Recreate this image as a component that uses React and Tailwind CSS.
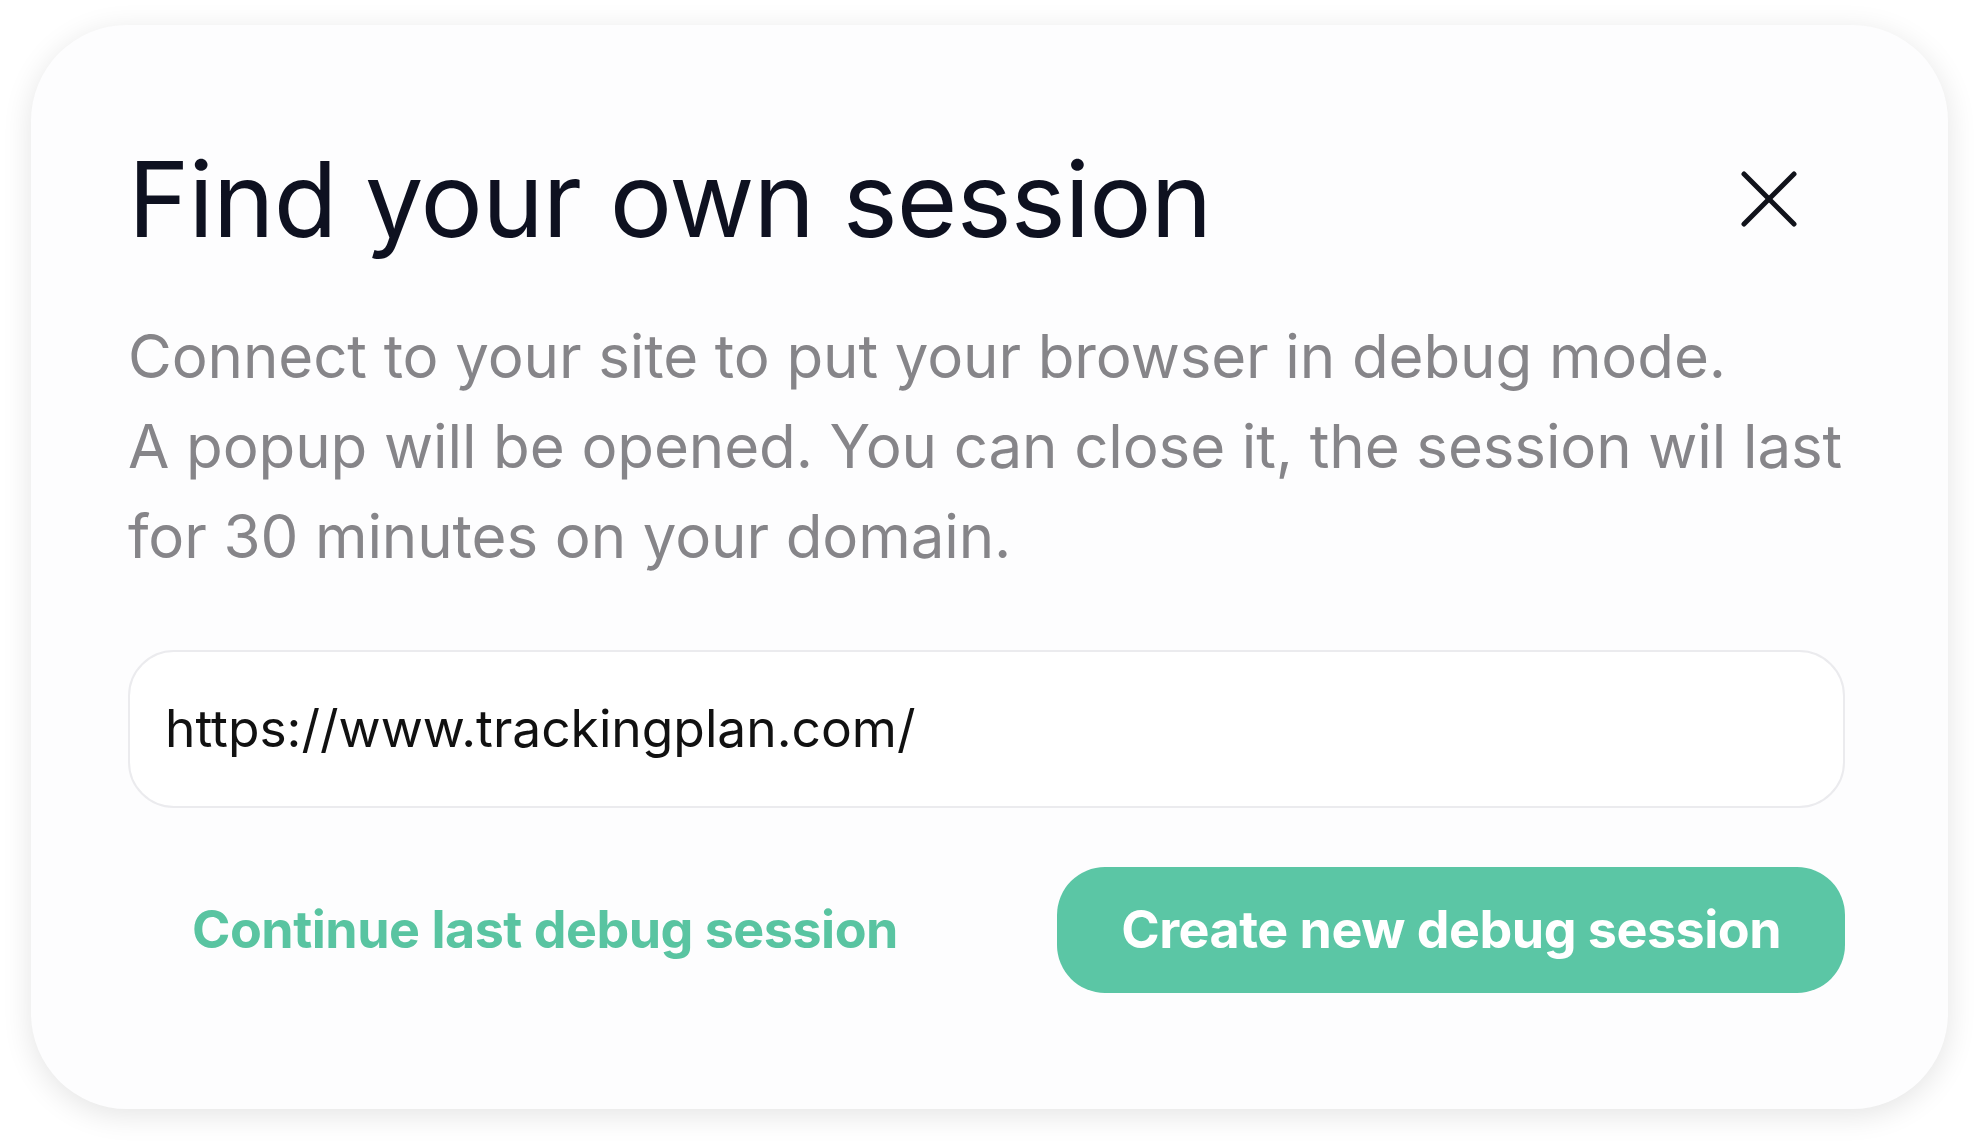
import React from 'react';

const CloseIcon = () => (
    <svg width="56" height="56" viewBox="0 0 56 56" fill="none" stroke="#11131b" strokeWidth="5" strokeLinecap="round">
        <path d="M3 3 53 53" />
        <path d="M53 3 3 53" />
    </svg>
);

const App = () => {
    const lignes = [
        'Connect to your site to put your browser in debug mode.',
        'A popup will be opened. You can close it, the session wil last',
        'for 30 minutes on your domain.'
    ];

    return (
        <div className="min-h-screen bg-white pt-[25px] pl-[31px] pr-[29px] pb-[34px] font-['Inter','Noto_Sans',sans-serif]">
            <div className="rounded-[96px] bg-[#fdfdfe] shadow-[0_6px_30px_rgba(0,0,0,0.11)] pl-[97px] pr-[103px] pt-[122px] pb-[116px]">
                <div className="flex items-center justify-between">
                    <h1 className="text-[104px] leading-none text-[#0e1120] tracking-[-0.8px]">
                        Find your own session
                    </h1>
                    <button className="mr-[48px]">
                        <CloseIcon />
                    </button>
                </div>

                <p className="mt-[60px] text-[60px] leading-[90px] text-[#868589] tracking-[-0.1px]">
                    {lignes.map(ligne => (
                        <span key={ligne} className="block whitespace-nowrap">{ligne}</span>
                    ))}
                </p>

                <div className="mt-[69px] h-[158px] rounded-[46px] border-2 border-[#ebebee] bg-white flex items-center px-[35px]">
                    <span className="text-[51.5px] text-[#111111]">https://www.trackingplan.com/</span>
                </div>

                <div className="mt-[59px] flex items-center justify-between">
                    <button className="h-[126px] px-[64px] text-[52px] font-bold tracking-[-0.5px] text-[#59c4a1]">
                        Continue last debug session
                    </button>
                    <button className="h-[126px] px-[64px] rounded-[48px] bg-[#5bc6a5] text-[52px] font-bold tracking-[-0.5px] text-white">
                        Create new debug session
                    </button>
                </div>
            </div>
        </div>
    );
};

export default App;
